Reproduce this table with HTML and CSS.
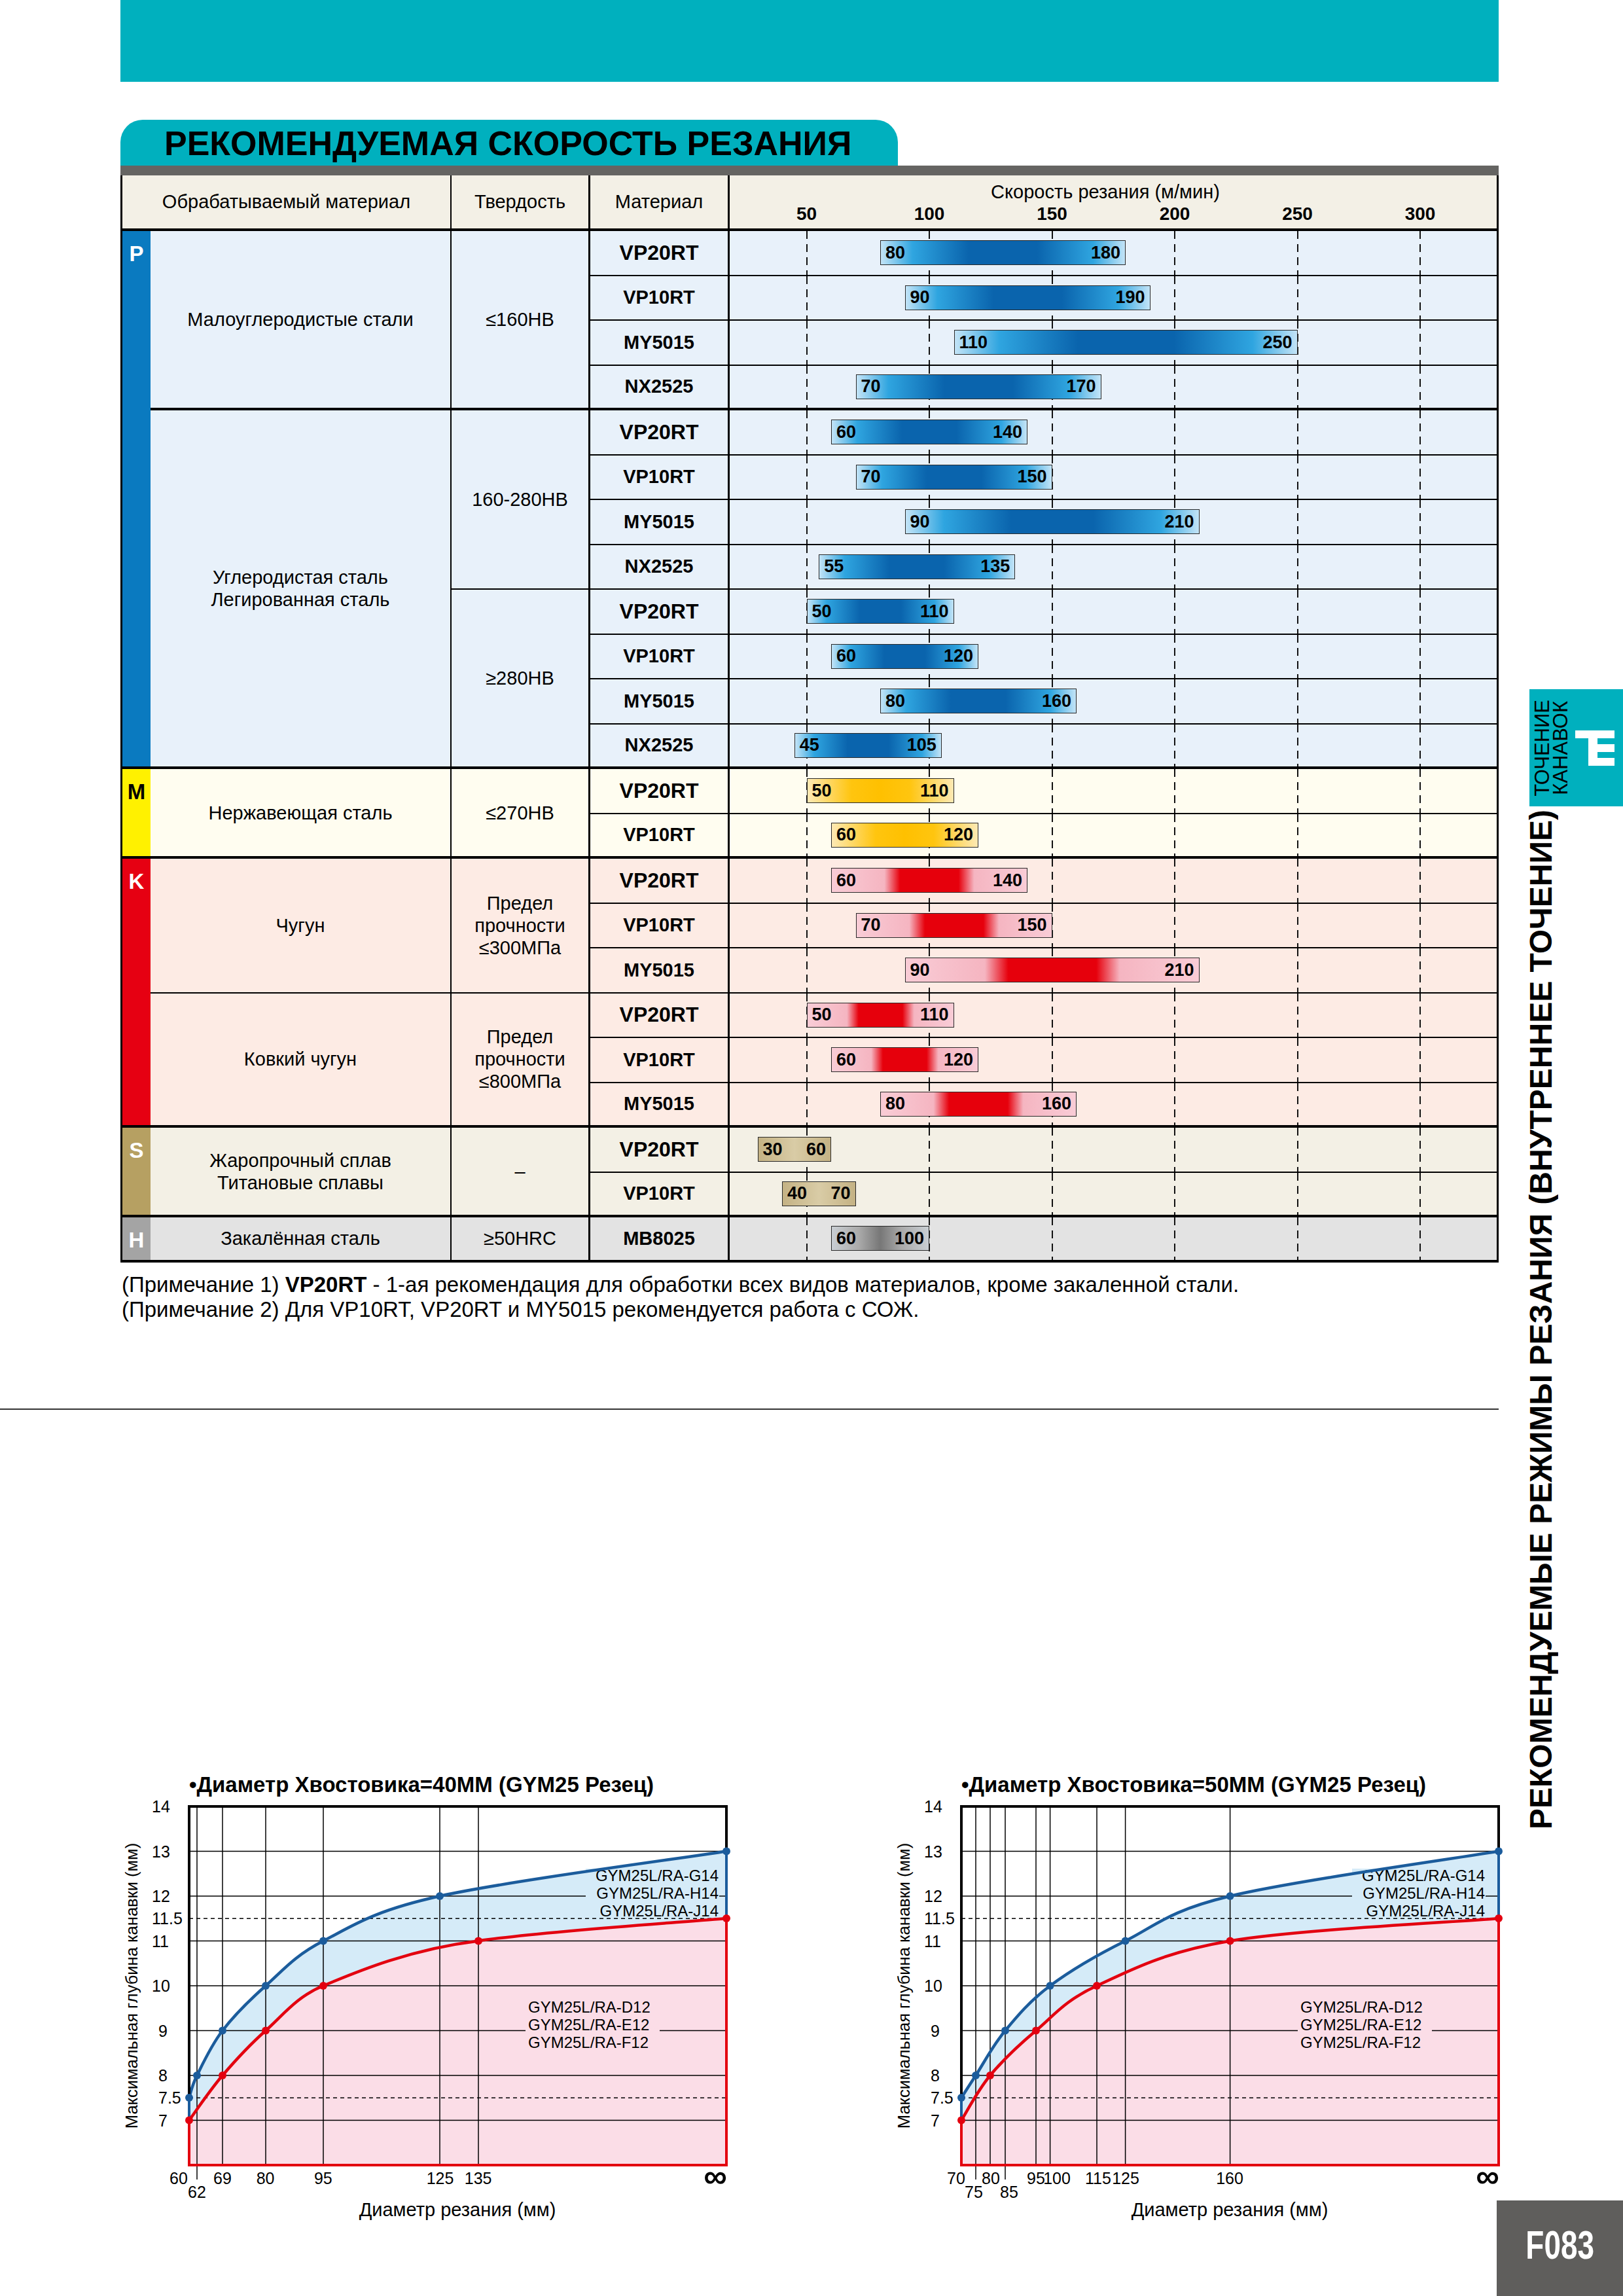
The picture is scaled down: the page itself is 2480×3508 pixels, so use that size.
FILE: index.html
```html
<!DOCTYPE html>
<html lang="ru">
<head>
<meta charset="utf-8">
<title>Рекомендуемая скорость резания</title>
<link rel="stylesheet" href="styles.css">
</head>
<body>
<div class="page">
  <main class="main">
    <div class="topbar"></div>
    <div class="tab"><h1>РЕКОМЕНДУЕМАЯ СКОРОСТЬ РЕЗАНИЯ</h1></div>
    <div class="grayline"></div>

    <div class="tbl">
      <div class="hd hd-mat">Обрабатываемый материал</div>
      <div class="hd hd-hard">Твердость</div>
      <div class="hd hd-grade">Материал</div>
      <div class="hd hd-speed">
        <div class="hd-title">Скорость резания (м/мин)</div>
        <div class="axis"><span>50</span><span>100</span><span>150</span><span>200</span><span>250</span><span>300</span></div>
      </div>

      <!-- P group 1 -->
      <div class="strip sP r12">P</div>
      <div class="name gP r4 end">Малоуглеродистые стали</div>
      <div class="hard gP r4 end">≤160HB</div>
      <div class="mat gP big">VP20RT</div>
      <div class="chart gP"><div class="bar bP" style="margin-left:230px;width:375px"><span>80</span><span>180</span></div></div>
      <div class="mat gP">VP10RT</div>
      <div class="chart gP"><div class="bar bP" style="margin-left:267.5px;width:375px"><span>90</span><span>190</span></div></div>
      <div class="mat gP">MY5015</div>
      <div class="chart gP"><div class="bar bP" style="margin-left:342.5px;width:525px"><span>110</span><span>250</span></div></div>
      <div class="mat gP end">NX2525</div>
      <div class="chart gP end"><div class="bar bP" style="margin-left:192.5px;width:375px"><span>70</span><span>170</span></div></div>

      <!-- P group 2 -->
      <div class="name gP r8 end">Углеродистая сталь<br>Легированная сталь</div>
      <div class="hard gP r4">160-280HB</div>
      <div class="mat gP big">VP20RT</div>
      <div class="chart gP"><div class="bar bP" style="margin-left:155px;width:300px"><span>60</span><span>140</span></div></div>
      <div class="mat gP">VP10RT</div>
      <div class="chart gP"><div class="bar bP" style="margin-left:192.5px;width:300px"><span>70</span><span>150</span></div></div>
      <div class="mat gP">MY5015</div>
      <div class="chart gP"><div class="bar bP" style="margin-left:267.5px;width:450px"><span>90</span><span>210</span></div></div>
      <div class="mat gP">NX2525</div>
      <div class="chart gP"><div class="bar bP" style="margin-left:136.25px;width:300px"><span>55</span><span>135</span></div></div>

      <div class="hard gP r4 end">≥280HB</div>
      <div class="mat gP big">VP20RT</div>
      <div class="chart gP"><div class="bar bP" style="margin-left:117.5px;width:225px"><span>50</span><span>110</span></div></div>
      <div class="mat gP">VP10RT</div>
      <div class="chart gP"><div class="bar bP" style="margin-left:155px;width:225px"><span>60</span><span>120</span></div></div>
      <div class="mat gP">MY5015</div>
      <div class="chart gP"><div class="bar bP" style="margin-left:230px;width:300px"><span>80</span><span>160</span></div></div>
      <div class="mat gP end">NX2525</div>
      <div class="chart gP end"><div class="bar bP" style="margin-left:98.75px;width:225px"><span>45</span><span>105</span></div></div>

      <!-- M -->
      <div class="strip sM r2">M</div>
      <div class="name gM r2 end">Нержавеющая сталь</div>
      <div class="hard gM r2 end">≤270HB</div>
      <div class="mat gM big">VP20RT</div>
      <div class="chart gM"><div class="bar bM" style="margin-left:117.5px;width:225px"><span>50</span><span>110</span></div></div>
      <div class="mat gM end">VP10RT</div>
      <div class="chart gM end"><div class="bar bM" style="margin-left:155px;width:225px"><span>60</span><span>120</span></div></div>

      <!-- K -->
      <div class="strip sK r6">K</div>
      <div class="name gK r3">Чугун</div>
      <div class="hard gK r3">Предел<br>прочности<br>≤300МПа</div>
      <div class="mat gK big">VP20RT</div>
      <div class="chart gK"><div class="bar bK" style="margin-left:155px;width:300px"><span>60</span><span>140</span></div></div>
      <div class="mat gK">VP10RT</div>
      <div class="chart gK"><div class="bar bK" style="margin-left:192.5px;width:300px"><span>70</span><span>150</span></div></div>
      <div class="mat gK">MY5015</div>
      <div class="chart gK"><div class="bar bK" style="margin-left:267.5px;width:450px"><span>90</span><span>210</span></div></div>

      <div class="name gK r3 end">Ковкий чугун</div>
      <div class="hard gK r3 end">Предел<br>прочности<br>≤800МПа</div>
      <div class="mat gK big">VP20RT</div>
      <div class="chart gK"><div class="bar bK" style="margin-left:117.5px;width:225px"><span>50</span><span>110</span></div></div>
      <div class="mat gK">VP10RT</div>
      <div class="chart gK"><div class="bar bK" style="margin-left:155px;width:225px"><span>60</span><span>120</span></div></div>
      <div class="mat gK end">MY5015</div>
      <div class="chart gK end"><div class="bar bK" style="margin-left:230px;width:300px"><span>80</span><span>160</span></div></div>

      <!-- S -->
      <div class="strip sS r2">S</div>
      <div class="name gS r2 end">Жаропрочный сплав<br>Титановые сплавы</div>
      <div class="hard gS r2 end">–</div>
      <div class="mat gS big">VP20RT</div>
      <div class="chart gS"><div class="bar bS" style="margin-left:42.5px;width:112.5px"><span>30</span><span>60</span></div></div>
      <div class="mat gS end">VP10RT</div>
      <div class="chart gS end"><div class="bar bS" style="margin-left:80px;width:112.5px"><span>40</span><span>70</span></div></div>

      <!-- H -->
      <div class="strip sH">H</div>
      <div class="name gH end">Закалённая сталь</div>
      <div class="hard gH end">≥50HRC</div>
      <div class="mat gH end">MB8025</div>
      <div class="chart gH end"><div class="bar bH" style="margin-left:155px;width:150px"><span>60</span><span>100</span></div></div>
    </div>

    <div class="notes">
      <p>(Примечание 1) <b>VP20RT</b> - 1-ая рекомендация для обработки всех видов материалов, кроме закаленной стали.</p>
      <p>(Примечание 2) Для VP10RT, VP20RT и MY5015 рекомендуется работа с СОЖ.</p>
    </div>

    <div class="divider"></div>

    <div class="charts">
      <svg class="graph" width="940" height="700" viewBox="0 0 940 700">
        <text class="ct" x="109" y="37">•Диаметр Хвостовика=40ММ (GYM25 Резец)</text>
        <text class="yt" transform="translate(21,333) rotate(-90)">Максимальная глубина канавки (мм)</text>
        <g transform="translate(109,59)">
          <rect class="bg" x="0" y="0" width="821" height="548"/>
          <path class="fb" d="M0,445 C2,439.3 3.5,428.1 12,411 C20.5,393.9 33.5,365.3 51,342.5 C68.5,319.7 91.3,296.8 117,274 C142.7,251.2 160.7,228.3 205,205.5 C249.3,182.7 280.3,159.8 383,137 C485.7,114.2 748,79.9 821,68.5 L821,548 L0,548 Z"/>
          <path class="fr" d="M0,479.5 C8.5,468.1 31.5,433.8 51,411 C70.5,388.2 91.3,365.3 117,342.5 C142.7,319.7 165,290 205,274 C259.2,251.2 339.3,218 442,205.5 C544.7,190 757.8,176.75 821,171 L821,548 L0,548 Z"/>
          <g class="g">
            <line x1="0" y1="68.5" x2="821" y2="68.5"/>
            <line x1="0" y1="137" x2="821" y2="137"/>
            <line x1="0" y1="205.5" x2="821" y2="205.5"/>
            <line x1="0" y1="274" x2="821" y2="274"/>
            <line x1="0" y1="342.5" x2="821" y2="342.5"/>
            <line x1="0" y1="411" x2="821" y2="411"/>
            <line x1="0" y1="479.5" x2="821" y2="479.5"/>
            <line x1="12" y1="0" x2="12" y2="570"/>
            <line x1="51" y1="0" x2="51" y2="548"/>
            <line x1="117" y1="0" x2="117" y2="548"/>
            <line x1="205" y1="0" x2="205" y2="548"/>
            <line x1="383" y1="0" x2="383" y2="548"/>
            <line x1="442" y1="0" x2="442" y2="548"/>
          </g>
          <g class="gd">
            <line x1="0" y1="171.25" x2="821" y2="171.25"/>
            <line x1="0" y1="445.25" x2="821" y2="445.25"/>
          </g>
          <rect class="mb" x="606" y="95" width="204" height="74"/>
          <rect class="mr" x="514" y="294" width="205" height="80"/>
          <text class="lb" x="809" y="114" text-anchor="end">GYM25L/RA-G14</text>
          <text class="lb" x="809" y="141" text-anchor="end">GYM25L/RA-H14</text>
          <text class="lb" x="809" y="167.5" text-anchor="end">GYM25L/RA-J14</text>
          <text class="lb" x="518" y="314.5">GYM25L/RA-D12</text>
          <text class="lb" x="518" y="342">GYM25L/RA-E12</text>
          <text class="lb" x="518" y="369">GYM25L/RA-F12</text>
          <path class="cr" d="M0,479.5 C8.5,468.1 31.5,433.8 51,411 C70.5,388.2 91.3,365.3 117,342.5 C142.7,319.7 165,290 205,274 C259.2,251.2 339.3,218 442,205.5 C544.7,190 757.8,176.75 821,171"/>
          <path class="cb" d="M0,445 C2,439.3 3.5,428.1 12,411 C20.5,393.9 33.5,365.3 51,342.5 C68.5,319.7 91.3,296.8 117,274 C142.7,251.2 160.7,228.3 205,205.5 C249.3,182.7 280.3,159.8 383,137 C485.7,114.2 748,79.9 821,68.5"/>
          <path class="fk" d="M0,445 L0,0 L821,0 L821,68.5"/>
          <path class="fbl" d="M0,445 L0,479.5 M821,68.5 L821,171"/>
          <path class="frd" d="M0,479.5 L0,548 L821,548 L821,171"/>
          <g class="db">
            <circle cx="0" cy="445" r="6"/><circle cx="12" cy="411" r="6"/><circle cx="51" cy="342.5" r="6"/><circle cx="117" cy="274" r="6"/><circle cx="205" cy="205.5" r="6"/><circle cx="383" cy="137" r="6"/><circle cx="821" cy="68.5" r="6"/>
          </g>
          <g class="dr">
            <circle cx="0" cy="479.5" r="6"/><circle cx="51" cy="411" r="6"/><circle cx="117" cy="342.5" r="6"/><circle cx="205" cy="274" r="6"/><circle cx="442" cy="205.5" r="6"/><circle cx="821" cy="171" r="6"/>
          </g>
        </g>
        <g class="tk">
          <text x="52" y="68">14</text><text x="52" y="136.5">13</text><text x="52" y="205">12</text><text x="52" y="239">11.5</text><text x="52" y="273.5">11</text><text x="52" y="342">10</text><text x="62" y="410.5">9</text><text x="62" y="479">8</text><text x="62" y="513">7.5</text><text x="62" y="547.5">7</text>
        </g>
        <g class="xt">
          <text x="93" y="636">60</text><text x="121" y="657">62</text><text x="160" y="636">69</text><text x="225.6" y="636">80</text><text x="313.8" y="636">95</text><text x="492.5" y="636">125</text><text x="550.6" y="636">135</text>
        </g>
        <text class="inf" x="931" y="641">∞</text>
        <text class="ax" x="519" y="685">Диаметр резания (мм)</text>
      </svg>

      <svg class="graph" width="940" height="700" viewBox="0 0 940 700">
        <text class="ct" x="109" y="37">•Диаметр Хвостовика=50ММ (GYM25 Резец)</text>
        <text class="yt" transform="translate(21,333) rotate(-90)">Максимальная глубина канавки (мм)</text>
        <g transform="translate(109,59)">
          <rect class="bg" x="0" y="0" width="821" height="548"/>
          <path class="fb" d="M0,445 C3.7,439.3 10.8,428.1 22,411 C33.2,393.9 48.1,365.3 67,342.5 C85.9,319.7 105,296.8 135.6,274 C166.2,251.2 204.8,228.3 250.6,205.5 C296.4,182.7 315.5,159.8 410.6,137 C505.7,114.2 752.6,79.9 821,68.5 L821,548 L0,548 Z"/>
          <path class="fr" d="M0,479.5 C7.3,468.1 25,433.8 44,411 C63,388.2 86.8,365.3 114,342.5 C141.2,319.7 157.6,296.8 207,274 C256.4,251.2 308.3,222.7 410.6,205.5 C512.9,188.3 752.6,176.75 821,171 L821,548 L0,548 Z"/>
          <g class="g">
            <line x1="0" y1="68.5" x2="821" y2="68.5"/>
            <line x1="0" y1="137" x2="821" y2="137"/>
            <line x1="0" y1="205.5" x2="821" y2="205.5"/>
            <line x1="0" y1="274" x2="821" y2="274"/>
            <line x1="0" y1="342.5" x2="821" y2="342.5"/>
            <line x1="0" y1="411" x2="821" y2="411"/>
            <line x1="0" y1="479.5" x2="821" y2="479.5"/>
            <line x1="22" y1="0" x2="22" y2="570"/>
            <line x1="44" y1="0" x2="44" y2="548"/>
            <line x1="67" y1="0" x2="67" y2="570"/>
            <line x1="114" y1="0" x2="114" y2="548"/>
            <line x1="135.6" y1="0" x2="135.6" y2="548"/>
            <line x1="207" y1="0" x2="207" y2="548"/>
            <line x1="250.6" y1="0" x2="250.6" y2="548"/>
            <line x1="410.6" y1="0" x2="410.6" y2="548"/>
          </g>
          <g class="gd">
            <line x1="0" y1="171.25" x2="821" y2="171.25"/>
            <line x1="0" y1="445.25" x2="821" y2="445.25"/>
          </g>
          <rect class="mb" x="597" y="95" width="204" height="74"/>
          <rect class="mr" x="514" y="294" width="205" height="80"/>
          <text class="lb" x="800" y="114" text-anchor="end">GYM25L/RA-G14</text>
          <text class="lb" x="800" y="141" text-anchor="end">GYM25L/RA-H14</text>
          <text class="lb" x="800" y="167.5" text-anchor="end">GYM25L/RA-J14</text>
          <text class="lb" x="518" y="314.5">GYM25L/RA-D12</text>
          <text class="lb" x="518" y="342">GYM25L/RA-E12</text>
          <text class="lb" x="518" y="369">GYM25L/RA-F12</text>
          <path class="cr" d="M0,479.5 C7.3,468.1 25,433.8 44,411 C63,388.2 86.8,365.3 114,342.5 C141.2,319.7 157.6,296.8 207,274 C256.4,251.2 308.3,222.7 410.6,205.5 C512.9,188.3 752.6,176.75 821,171"/>
          <path class="cb" d="M0,445 C3.7,439.3 10.8,428.1 22,411 C33.2,393.9 48.1,365.3 67,342.5 C85.9,319.7 105,296.8 135.6,274 C166.2,251.2 204.8,228.3 250.6,205.5 C296.4,182.7 315.5,159.8 410.6,137 C505.7,114.2 752.6,79.9 821,68.5"/>
          <path class="fk" d="M0,445 L0,0 L821,0 L821,68.5"/>
          <path class="fbl" d="M0,445 L0,479.5 M821,68.5 L821,171"/>
          <path class="frd" d="M0,479.5 L0,548 L821,548 L821,171"/>
          <g class="db">
            <circle cx="0" cy="445" r="6"/><circle cx="22" cy="411" r="6"/><circle cx="67" cy="342.5" r="6"/><circle cx="135.6" cy="274" r="6"/><circle cx="250.6" cy="205.5" r="6"/><circle cx="410.6" cy="137" r="6"/><circle cx="821" cy="68.5" r="6"/>
          </g>
          <g class="dr">
            <circle cx="0" cy="479.5" r="6"/><circle cx="44" cy="411" r="6"/><circle cx="114" cy="342.5" r="6"/><circle cx="207" cy="274" r="6"/><circle cx="410.6" cy="205.5" r="6"/><circle cx="821" cy="171" r="6"/>
          </g>
        </g>
        <g class="tk">
          <text x="52" y="68">14</text><text x="52" y="136.5">13</text><text x="52" y="205">12</text><text x="52" y="239">11.5</text><text x="52" y="273.5">11</text><text x="52" y="342">10</text><text x="62" y="410.5">9</text><text x="62" y="479">8</text><text x="62" y="513">7.5</text><text x="62" y="547.5">7</text>
        </g>
        <g class="xt">
          <text x="101" y="636">70</text><text x="128" y="657">75</text><text x="154" y="636">80</text><text x="182" y="657">85</text><text x="223" y="636">95</text><text x="255" y="636">100</text><text x="318" y="636">115</text><text x="360" y="636">125</text><text x="519" y="636">160</text>
        </g>
        <text class="inf" x="931" y="641">∞</text>
        <text class="ax" x="519" y="685">Диаметр резания (мм)</text>
      </svg>
    </div>
  </main>

  <aside class="side">
    <div class="sidetab">
      <div class="sidetab-text">ТОЧЕНИЕ<br>КАНАВОК</div>
      <svg class="sidetab-icon" width="60" height="70" viewBox="0 0 60 70">
        <rect x="0" y="8" width="60" height="12" fill="#fff"/>
        <rect x="20" y="29" width="40" height="12" fill="#fff"/>
        <rect x="20" y="50" width="40" height="12" fill="#fff"/>
        <rect x="20" y="8" width="14" height="54" fill="#fff"/>
      </svg>
    </div>
    <div class="vtitle">РЕКОМЕНДУЕМЫЕ РЕЖИМЫ РЕЗАНИЯ (ВНУТРЕННЕЕ ТОЧЕНИЕ)</div>
    <div class="pnum"><span>F083</span></div>
  </aside>
</div>
</body>
</html>
```

FILE: styles.css
```css
* { box-sizing: border-box; }
html, body { margin: 0; padding: 0; background: #fff; }
body { font-family: "Liberation Sans", Arial, sans-serif; color: #000; }

.page { width: 2480px; height: 3508px; display: flex; overflow: hidden; }
.main { margin-left: 184px; width: 2106px; display: flex; flex-direction: column; flex: none; }

.topbar { height: 125px; background: #00b0be; }
.tab { margin-top: 58px; width: 1188px; height: 70px; background: #00b0be; border-radius: 34px 34px 0 0; }
.tab h1 { margin: 0; padding-left: 67px; font-size: 52px; line-height: 72px; font-weight: bold; white-space: nowrap; }
.grayline { height: 15px; background: #656462; }

/* table */
.tbl {
  display: grid;
  grid-template-columns: 43px 460px 212px 213px 1172px;
  grid-template-rows: 85px repeat(23, 68.5px);
  border-left: 3px solid #000;
  border-right: 3px solid #000;
}
.hd { background: #f3f0e6; border-bottom: 4px solid #000; display: flex; align-items: center; justify-content: center; font-size: 29px; }
.hd-mat { grid-column: 1 / span 2; border-right: 2px solid #000; }
.hd-hard { border-right: 3px solid #000; }
.hd-grade { border-right: 3px solid #000; }
.hd-speed { flex-direction: column; align-items: stretch; justify-content: flex-start; padding-top: 9px; }
.hd-title { text-align: center; font-size: 29px; line-height: 32px; padding-right: 24px; }
.axis { display: flex; padding-left: 23.75px; margin-top: 3px; }
.axis span { width: 187.5px; text-align: center; font-weight: bold; font-size: 28px; line-height: 30px; }

.strip, .name, .hard, .mat, .chart { border-bottom: 2px solid #000; }
.end { border-bottom-width: 4px; }
.strip { grid-column: 1; border-bottom-width: 4px; color: #fff; font-weight: bold; font-size: 33px; line-height: 33px; text-align: center; padding-top: 18px; }
.name { grid-column: 2; border-right: 2px solid #000; }
.hard { grid-column: 3; border-right: 3px solid #000; }
.mat { grid-column: 4; border-right: 3px solid #000; font-weight: bold; font-size: 29px; }
.mat.big { font-size: 32px; }
.chart { grid-column: 5; }
.name, .hard, .mat { display: flex; align-items: center; justify-content: center; text-align: center; }
.name, .hard { font-size: 29px; line-height: 34px; }

.r2 { grid-row: span 2; }
.r3 { grid-row: span 3; }
.r4 { grid-row: span 4; }
.r6 { grid-row: span 6; }
.r8 { grid-row: span 8; }
.r12 { grid-row: span 12; }

.sP { background: #0a7ac0; }
.sM { background: #fff100; color: #000; }
.sK { background: #e60012; }
.sS { background: #b6a062; }
.sH { background: #a4a4a4; }

.gP { background-color: #e8f1fa; }
.gM { background-color: #fffdf0; }
.gK { background-color: #fdebe4; }
.gS { background-color: #f3f0e5; }
.gH { background-color: #e3e3e3; }

.chart {
  display: flex;
  align-items: center;
  background-image:
    repeating-linear-gradient(to bottom, #111 0 12px, transparent 12px 20px),
    repeating-linear-gradient(to bottom, #111 0 12px, transparent 12px 20px),
    repeating-linear-gradient(to bottom, #111 0 12px, transparent 12px 20px),
    repeating-linear-gradient(to bottom, #111 0 12px, transparent 12px 20px),
    repeating-linear-gradient(to bottom, #111 0 12px, transparent 12px 20px),
    repeating-linear-gradient(to bottom, #111 0 12px, transparent 12px 20px);
  background-size: 2px 100%;
  background-repeat: no-repeat;
  background-position: 116.5px 0, 304px 0, 491.5px 0, 679px 0, 866.5px 0, 1054px 0;
}

.bar {
  flex: none;
  height: 38px;
  border: 1.5px solid #2a2a2a;
  display: flex;
  align-items: center;
  justify-content: space-between;
  padding: 0 7px;
  font-weight: bold;
  font-size: 27px;
}
.bP { background: linear-gradient(90deg, #c3e4f7 0%, #2fa5e0 13%, #0a64ad 36%, #0a64ad 64%, #2fa5e0 87%, #c3e4f7 100%); }
.bM { background: linear-gradient(90deg, #fde9b4 0%, #ffc50f 30%, #ffc000 50%, #ffc50f 70%, #fde9b4 100%); }
.bK { background: linear-gradient(90deg, #f9ccd6 0%, #f5b5c1 27%, #e6000c 35%, #e6000c 65%, #f5b5c1 73%, #f9ccd6 100%); }
.bS { background: linear-gradient(90deg, #c4b284 0%, #d9cca6 50%, #c4b284 100%); }
.bH { background: linear-gradient(90deg, #c9ced3 0%, #aaa 28%, #777 50%, #aaa 72%, #c9ced3 100%); }

.notes { margin-top: 15px; padding-left: 2px; font-size: 33px; line-height: 38px; }
.notes p { margin: 0; white-space: nowrap; }

.divider { margin-top: 132px; margin-left: -184px; width: 2290px; height: 2px; background: #333; }

.charts { margin-top: 547px; margin-left: -4px; display: flex; gap: 240px; }
.graph { display: block; flex: none; overflow: visible; }
.graph text { font-family: "Liberation Sans", Arial, sans-serif; }
.ct { font-size: 33px; font-weight: bold; }
.yt { font-size: 25.5px; text-anchor: middle; dominant-baseline: central; }
.tk text { font-size: 25px; }
.xt text { font-size: 25px; text-anchor: middle; }
.inf { font-size: 50px; font-weight: bold; text-anchor: end; }
.ax { font-size: 29px; text-anchor: middle; }
.lb { font-size: 24px; }
.bg { fill: #fff; }
.fb { fill: #d5ebf8; }
.fr { fill: #fbdde7; }
.mb { fill: #d5ebf8; }
.mr { fill: #fbdde7; }
.g line { stroke: #000; stroke-width: 1.5; }
.gd line { stroke: #000; stroke-width: 1.5; stroke-dasharray: 6 5; }
.cb { fill: none; stroke: #1b5c9c; stroke-width: 4.5; }
.cr { fill: none; stroke: #e3000f; stroke-width: 4.5; }
.fk { fill: none; stroke: #000; stroke-width: 4; }
.fbl { fill: none; stroke: #1b5c9c; stroke-width: 4; }
.frd { fill: none; stroke: #e3000f; stroke-width: 4; }
.db { fill: #1b5c9c; }
.dr { fill: #e3000f; }

/* right side */
.side { width: 190px; flex: none; display: flex; flex-direction: column; }
.sidetab { margin-top: 1053px; margin-left: 47px; width: 143px; height: 179px; background: #00b0be; display: flex; align-items: center; }
.sidetab-text { writing-mode: vertical-rl; transform: rotate(180deg); font-size: 31px; line-height: 28px; margin-left: 6px; text-align: center; white-space: nowrap; }
.sidetab-icon { margin-left: 8px; }
.vtitle {
  margin-top: 9px;
  margin-left: 40px;
  height: 1554px;
  width: 50px;
  writing-mode: vertical-rl;
  transform: rotate(180deg);
  font-size: 48px;
  line-height: 50px;
  font-weight: bold;
  white-space: nowrap;
  text-align: center;
}
.pnum { margin-top: auto; margin-left: -3px; width: 193px; height: 146px; background: #5f5e5c; color: #fff; display: flex; align-items: center; justify-content: center; padding-bottom: 12px; }
.pnum span { display: inline-block; font-size: 62px; font-weight: bold; transform: scaleX(0.74); }
```
